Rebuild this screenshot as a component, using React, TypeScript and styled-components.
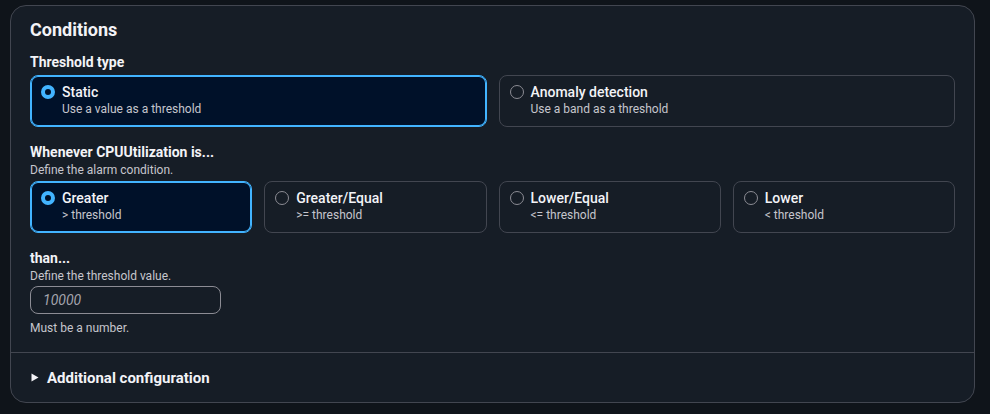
import React, { useState } from 'react';
import styled, { createGlobalStyle, css } from 'styled-components';

const palette = {
  page: '#0f141a',
  card: '#161d26',
  border: '#424650',
  inputBorder: '#8c8c94',
  selectedBg: '#001129',
  accent: '#42b4ff',
  text: '#dedee3',
  heading: '#f3f3f7',
  muted: '#c6c6cd',
  placeholder: '#a4a4ad',
};

const GlobalStyle = createGlobalStyle`
  html, body {
    margin: 0;
    background: ${palette.page};
  }
  body {
    font-family: Roboto, 'Open Sans', 'Liberation Sans', sans-serif;
    color: ${palette.text};
    -webkit-font-smoothing: antialiased;
  }
`;

const Page = styled.div`
  padding: 5px 15px 12px 10px;
`;

const Card = styled.section`
  background: ${palette.card};
  border: 1px solid ${palette.border};
  border-radius: 16px;
  overflow: hidden;
`;

const CardBody = styled.div`
  padding: 12px 19px 16px 19px;
`;

const Title = styled.h2`
  margin: 0 0 10px;
  font-size: 18px;
  line-height: 24px;
  font-weight: 700;
  color: ${palette.heading};
`;

const Field = styled.div`
  display: flex;
  flex-direction: column;
  & + & {
    margin-top: 15px;
  }
`;

const Label = styled.div`
  font-size: 14px;
  line-height: 20px;
  font-weight: 700;
  color: ${palette.heading};
`;

const Hint = styled.div`
  font-size: 12px;
  line-height: 16px;
  color: ${palette.muted};
`;

const TileGrid = styled.div<{ columns: number }>`
  display: grid;
  grid-template-columns: repeat(${p => p.columns}, 1fr);
  gap: 12px;
  margin-top: 3px;
`;

const Tile = styled.button<{ selected: boolean }>`
  all: unset;
  box-sizing: border-box;
  display: flex;
  align-items: flex-start;
  gap: 7px;
  height: 52px;
  padding: 7px 12px 0 10px;
  border-radius: 8px;
  border: 1px solid ${palette.border};
  cursor: pointer;
  ${p =>
    p.selected &&
    css`
      background: ${palette.selectedBg};
      border-color: ${palette.accent};
      box-shadow: inset 0 0 0 1px ${palette.accent};
    `}
`;

const Radio = styled.span<{ checked: boolean }>`
  flex: none;
  box-sizing: border-box;
  width: 14px;
  height: 14px;
  margin-top: 2px;
  border-radius: 50%;
  border: 1.5px solid ${palette.inputBorder};
  ${p =>
    p.checked &&
    css`
      border: 4px solid ${palette.accent};
      background: ${palette.selectedBg};
    `}
`;

const TileText = styled.span`
  display: flex;
  flex-direction: column;
`;

const TileTitle = styled.span`
  font-size: 14px;
  line-height: 18px;
  font-weight: 500;
  color: ${palette.heading};
`;

const TileDesc = styled.span`
  font-size: 12px;
  line-height: 16px;
  color: ${palette.muted};
`;

const Input = styled.input`
  box-sizing: border-box;
  width: 191px;
  height: 28px;
  margin: 2px 0 6px;
  padding: 0 12px;
  border-radius: 8px;
  border: 1px solid ${palette.inputBorder};
  background: transparent;
  color: ${palette.text};
  font-family: inherit;
  font-size: 14px;
  outline: none;
  &::placeholder {
    color: ${palette.placeholder};
    font-style: italic;
  }
`;

const Expander = styled.button`
  all: unset;
  box-sizing: border-box;
  display: flex;
  align-items: center;
  gap: 8px;
  width: 100%;
  height: 50px;
  padding: 0 20px;
  border-top: 1px solid ${palette.border};
  font-size: 15px;
  font-weight: 700;
  color: ${palette.heading};
  cursor: pointer;
`;

const Caret = () => (
  <svg width="8" height="9" viewBox="0 0 8 9" aria-hidden>
    <path d="M0.5 0.5 L7.5 4.5 L0.5 8.5 Z" fill={palette.heading} />
  </svg>
);

interface Option {
  id: string;
  title: string;
  desc: string;
}

const thresholdTypes: Option[] = [
  { id: 'static', title: 'Static', desc: 'Use a value as a threshold' },
  { id: 'anomaly', title: 'Anomaly detection', desc: 'Use a band as a threshold' },
];

const comparisons: Option[] = [
  { id: 'gt', title: 'Greater', desc: '> threshold' },
  { id: 'gte', title: 'Greater/Equal', desc: '>= threshold' },
  { id: 'lte', title: 'Lower/Equal', desc: '<= threshold' },
  { id: 'lt', title: 'Lower', desc: '< threshold' },
];

interface TilesProps {
  options: Option[];
  value: string;
  onChange: (id: string) => void;
}

const Tiles: React.FC<TilesProps> = ({ options, value, onChange }) => (
  <TileGrid columns={options.length}>
    {options.map(o => (
      <Tile key={o.id} selected={o.id === value} onClick={() => onChange(o.id)}>
        <Radio checked={o.id === value} />
        <TileText>
          <TileTitle>{o.title}</TileTitle>
          <TileDesc>{o.desc}</TileDesc>
        </TileText>
      </Tile>
    ))}
  </TileGrid>
);

const App: React.FC = () => {
  const [type, setType] = useState('static');
  const [comparison, setComparison] = useState('gt');

  return (
    <Page>
      <GlobalStyle />
      <Card>
        <CardBody>
          <Title>Conditions</Title>
          <Field>
            <Label>Threshold type</Label>
            <Tiles options={thresholdTypes} value={type} onChange={setType} />
          </Field>
          <Field>
            <Label>Whenever CPUUtilization is...</Label>
            <Hint>Define the alarm condition.</Hint>
            <Tiles options={comparisons} value={comparison} onChange={setComparison} />
          </Field>
          <Field>
            <Label>than...</Label>
            <Hint>Define the threshold value.</Hint>
            <Input placeholder="10000" />
            <Hint>Must be a number.</Hint>
          </Field>
        </CardBody>
        <Expander>
          <Caret />
          Additional configuration
        </Expander>
      </Card>
    </Page>
  );
};

export default App;
